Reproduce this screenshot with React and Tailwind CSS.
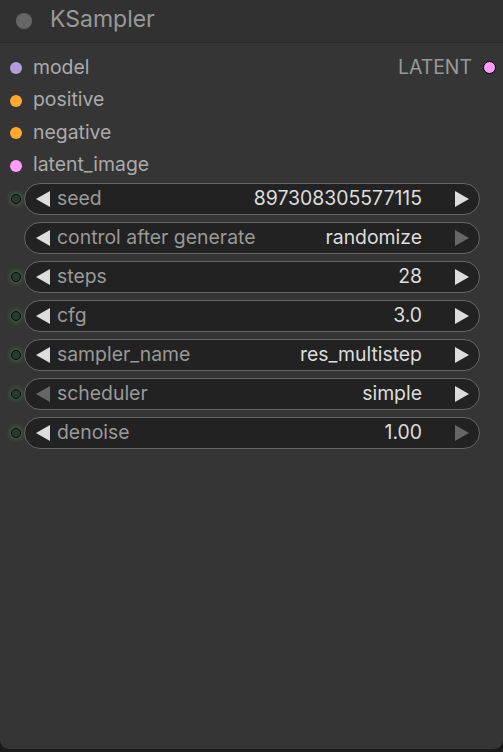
import React from "react";

const slots = [
  { name: "model", color: "bg-[#b39ddb]" },
  { name: "positive", color: "bg-[#ffa931]" },
  { name: "negative", color: "bg-[#ffa931]" },
  { name: "latent_image", color: "bg-[#ff9cf9]" },
];

const widgets = [
  { label: "seed", value: "897308305577115", input: true, l: true, r: true },
  { label: "control after generate", value: "randomize", input: false, l: true, r: false },
  { label: "steps", value: "28", input: true, l: true, r: true },
  { label: "cfg", value: "3.0", input: true, l: true, r: true },
  { label: "sampler_name", value: "res_multistep", input: true, l: true, r: true },
  { label: "scheduler", value: "simple", input: true, l: false, r: true },
  { label: "denoise", value: "1.00", input: true, l: true, r: false },
];

function Arrow({ dir, on }) {
  return (
    <svg width="16" height="18" viewBox="0 0 16 18" className="shrink-0">
      {dir === "l" ? (
        <polygon points="15,1 15,17 1,9" fill={on ? "#dddddd" : "#666666"} />
      ) : (
        <polygon points="1,1 1,17 15,9" fill={on ? "#dddddd" : "#666666"} />
      )}
    </svg>
  );
}

export default function App() {
  return (
    <div
      className="w-[503px] h-[752px] bg-[#1b1b1b]"
      style={{ fontFamily: "Inter, 'Liberation Sans', sans-serif" }}
    >
      <div className="w-[503px] h-[749px] bg-[#353535] rounded-b-[9px] flex flex-col overflow-hidden">
        <div className="h-[43px] shrink-0 bg-[#313131] border-b border-[#2a2a2a] flex items-center">
          <div className="w-[16px] h-[16px] rounded-full bg-[#666666] ml-[16px]" />
          <div className="ml-[18px] text-[23px] text-[#999999] leading-none -mt-[3px]">KSampler</div>
        </div>
        <div className="relative flex flex-col pt-[9px]">
          <div className="absolute right-[7px] top-[15px] flex items-center gap-[11px]">
            <span className="text-[19.4px] text-[#999999] leading-none">LATENT</span>
            <div className="w-[13px] h-[13px] rounded-full bg-[#ff9cf9] border-[1.5px] border-black" />
          </div>
          {slots.map((s) => (
            <div key={s.name} className="h-[32.5px] flex items-center">
              <div className={`w-[12px] h-[12px] rounded-full ${s.color} ml-[10px]`} />
              <span className="ml-[11px] text-[19.4px] text-[#aaaaaa] leading-none -mt-[2px]">{s.name}</span>
            </div>
          ))}
        </div>
        <div className="flex flex-col gap-[7px] mt-[1px]">
          {widgets.map((w) => (
            <div key={w.label} className="flex items-center h-[32px]">
              <div className="w-[24px] flex justify-center shrink-0">
                {w.input && (
                  <div className="w-[10px] h-[10px] rounded-full bg-[#2c3a2c] border-[1.5px] border-[#050a05] ml-[8px] shadow-[0_0_5px_1px_rgba(90,170,90,0.45)]" />
                )}
              </div>
              <div className="w-[456px] h-[32px] rounded-full bg-[#222222] border border-[#666666] flex items-center pl-[10px] pr-[9px]">
                <Arrow dir="l" on={w.l} />
                <span className="ml-[6px] text-[19.4px] text-[#999999] leading-none flex-1 -mt-[1px]">{w.label}</span>
                <span className="text-[19.4px] text-[#dddddd] leading-none -mt-[1px]">{w.value}</span>
                <div className="ml-[32px]"><Arrow dir="r" on={w.r} /></div>
              </div>
            </div>
          ))}
        </div>
      </div>
    </div>
  );
}
